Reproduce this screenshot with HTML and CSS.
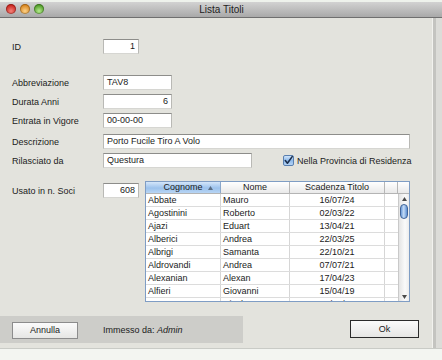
FILE: index.html
```html
<!DOCTYPE html>
<html>
<head>
<meta charset="utf-8">
<link rel="stylesheet" href="styles.css">
</head>
<body>
<div class="window">
  <div class="topline"></div>
  <div class="titlebar">
    <div class="lights">
      <span class="light red"></span>
      <span class="light orange"></span>
      <span class="light green"></span>
    </div>
    <div class="title">Lista Titoli</div>
  </div>
  <div class="main">
    <div class="content">
      <div class="row r-id">
        <div class="label">ID</div>
        <div class="field w36 right">1</div>
      </div>
      <div class="row r-abbr">
        <div class="label">Abbreviazione</div>
        <div class="field w69">TAV8</div>
      </div>
      <div class="row r-4">
        <div class="label">Durata Anni</div>
        <div class="field w69 right">6</div>
      </div>
      <div class="row r-4">
        <div class="label">Entrata in Vigore</div>
        <div class="field w69">00-00-00</div>
      </div>
      <div class="row r-6">
        <div class="label">Descrizione</div>
        <div class="field w307">Porto Fucile Tiro A Volo</div>
      </div>
      <div class="row r-4">
        <div class="label">Rilasciato da</div>
        <div class="field w149">Questura</div>
        <div class="check">
          <svg width="11" height="11" viewBox="0 0 11 11">
            <defs>
              <linearGradient id="cb" x1="0" y1="0" x2="0" y2="1">
                <stop offset="0" stop-color="#d6e8fb"/>
                <stop offset="0.5" stop-color="#8fbbec"/>
                <stop offset="1" stop-color="#b8d6f6"/>
              </linearGradient>
            </defs>
            <rect x="0.5" y="0.5" width="10" height="10" rx="1.5" fill="url(#cb)" stroke="#5a7fae"/>
            <path d="M2.3 5.6 L4.4 8.2 L9.2 1.6" fill="none" stroke="#1c2f4c" stroke-width="1.6" stroke-linecap="round" stroke-linejoin="round"/>
          </svg>
          <span>Nella Provincia di Residenza</span>
        </div>
      </div>
      <div class="row r-soci">
        <div class="label lbl-soci">Usato in n. Soci</div>
        <div class="field w36 right soci">608</div>
        <div class="table">
          <div class="thead">
            <div class="th sorted">Cognome
              <svg class="sort" width="5" height="4" viewBox="0 0 5 4"><path d="M0 4 L2.5 0 L5 4 Z" fill="#5b6f86"/></svg>
            </div>
            <div class="th">Nome</div>
            <div class="th">Scadenza Titolo</div>
            <div class="th"></div>
            <div class="th last"></div>
          </div>
          <div class="tbody">
            <div class="rows">
              <div class="tr"><div class="td">Abbate</div><div class="td">Mauro</div><div class="td c">16/07/24</div><div class="td"></div></div>
              <div class="tr"><div class="td">Agostinini</div><div class="td">Roberto</div><div class="td c">02/03/22</div><div class="td"></div></div>
              <div class="tr"><div class="td">Ajazi</div><div class="td">Eduart</div><div class="td c">13/04/21</div><div class="td"></div></div>
              <div class="tr"><div class="td">Alberici</div><div class="td">Andrea</div><div class="td c">22/03/25</div><div class="td"></div></div>
              <div class="tr"><div class="td">Albrigi</div><div class="td">Samanta</div><div class="td c">22/10/21</div><div class="td"></div></div>
              <div class="tr"><div class="td">Aldrovandi</div><div class="td">Andrea</div><div class="td c">07/07/21</div><div class="td"></div></div>
              <div class="tr"><div class="td">Alexanian</div><div class="td">Alexan</div><div class="td c">17/04/23</div><div class="td"></div></div>
              <div class="tr"><div class="td">Alfieri</div><div class="td">Giovanni</div><div class="td c">15/04/19</div><div class="td"></div></div>
              <div class="tr"><div class="td">Amato</div><div class="td">Nicola</div><div class="td c">30/06/22</div><div class="td"></div></div>
            </div>
            <div class="scroll">
              <svg class="arrow" width="5" height="4" viewBox="0 0 5 4"><path d="M0 4 L2.5 0 L5 4 Z" fill="#4a4a4a"/></svg>
              <div class="thumb"></div>
              <div class="track"></div>
              <svg class="arrow" width="5" height="4" viewBox="0 0 5 4"><path d="M0 0 L2.5 4 L5 0 Z" fill="#4a4a4a"/></svg>
            </div>
          </div>
        </div>
      </div>
      <div class="footer">
        <div class="strip">
          <div class="btn annulla">Annulla</div>
          <div class="immesso">Immesso da: <i>Admin</i></div>
        </div>
        <div class="btn ok">Ok</div>
      </div>
    </div>
    <div class="frame"></div>
  </div>
  <div class="bottom"></div>
</div>
</body>
</html>
```

FILE: styles.css
```css
* { box-sizing: border-box; }
html, body { margin: 0; padding: 0; }
body {
  width: 442px;
  height: 360px;
  overflow: hidden;
  font-family: "Liberation Sans", Arial, sans-serif;
  font-size: 9px;
  color: #1b1b1b;
  background: #e3e3dd;
}
.window {
  width: 442px;
  height: 360px;
  display: flex;
  flex-direction: column;
}
.topline {
  height: 2px;
  background: #eef2ec;
}
.titlebar {
  height: 16px;
  background: linear-gradient(#d2d2d2, #a9a9a9);
  border-bottom: 1px solid #6f6f6f;
  position: relative;
  display: flex;
  align-items: center;
  justify-content: center;
}
.lights {
  position: absolute;
  left: 6px;
  top: 2px;
  display: flex;
  gap: 4px;
}
.light {
  width: 10px;
  height: 10px;
  border-radius: 50%;
  box-shadow: inset 0 0 0 1px rgba(0,0,0,0.25);
}
.red { background: radial-gradient(circle at 50% 70%, #f5837a, #c8231b 70%); }
.orange { background: radial-gradient(circle at 50% 70%, #fdd38a, #d7841a 70%); }
.green { background: radial-gradient(circle at 50% 70%, #b6ec8e, #4d9a25 70%); }
.title {
  font-size: 10px;
  color: #222;
  margin-left: 1px;
}
.main {
  display: flex;
  height: 330px;
}
.content {
  width: 432px;
  display: flex;
  flex-direction: column;
  background: #e3e3dd;
}
.frame {
  width: 10px;
  border-left: 1px solid #f2f2ee;
  background: linear-gradient(90deg, #c4c4c0 0, #c4c4c0 3px, #dcdcd8 3px);
}
.bottom {
  height: 12px;
  border-top: 1px solid #c9cbc6;
  background: #f3f5f1;
}
.row {
  display: flex;
  align-items: center;
  padding-left: 12px;
}
.r-id { margin-top: 21px; }
.r-abbr { margin-top: 21px; }
.r-4 { margin-top: 4px; }
.r-6 { margin-top: 6px; }
.r-soci { margin-top: 13px; align-items: flex-start; }
.label {
  width: 91px;
  flex: none;
}
.lbl-soci { margin-top: 5px; }
.field {
  height: 15px;
  background: #fff;
  border: 1px solid #b9b9b5;
  border-top-color: #8d8d8a;
  border-bottom-color: #d6d6d2;
  padding: 0 3px;
  line-height: 13px;
  flex: none;
  white-space: nowrap;
}
.right { text-align: right; }
.w36 { width: 36px; }
.w69 { width: 69px; }
.w149 { width: 149px; }
.w307 { width: 307px; }
.soci { margin-top: 2px; }
.check {
  display: flex;
  align-items: center;
  margin-left: 31px;
  gap: 3px;
}
.check svg { display: block; }
.table {
  margin-left: 6px;
  width: 265px;
  height: 121px;
  border: 1px solid #7f9dc4;
  background: #fff;
  display: flex;
  flex-direction: column;
}
.thead {
  display: flex;
  height: 12px;
  background: linear-gradient(#ffffff, #e9e9e9);
  border-bottom: 1px solid #b4b4b4;
  flex: none;
}
.th {
  border-right: 1px solid #b6b6b6;
  text-align: center;
  line-height: 11px;
  position: relative;
}
.th:nth-child(1) { width: 75px; }
.th:nth-child(2) { width: 69px; }
.th:nth-child(3) { width: 95px; }
.th:nth-child(4) { width: 13px; }
.th.last { width: 11px; border-right: none; }
.th.sorted {
  background: linear-gradient(#d4e6fa, #9cc2ec 55%, #b8d5f4);
  border-right-color: #8aa7cb;
}
.sort {
  position: absolute;
  right: 7px;
  top: 4px;
}
.tbody {
  display: flex;
  flex: 1;
  overflow: hidden;
}
.rows {
  width: 252px;
  overflow: hidden;
}
.tr {
  display: flex;
  height: 13px;
  border-bottom: 1px solid #dcdcdc;
}
.td {
  border-right: 1px solid #d6d6d6;
  line-height: 12px;
  padding-left: 2px;
  white-space: nowrap;
  overflow: hidden;
}
.td:nth-child(1) { width: 75px; }
.td:nth-child(2) { width: 69px; }
.td:nth-child(3) { width: 95px; }
.td:nth-child(4) { width: 13px; border-right: none; }
.td.c { text-align: center; padding-left: 0; }
.scroll {
  width: 11px;
  border-left: 1px solid #c9c9c9;
  background: linear-gradient(90deg, #e4e4e4, #fafafa 60%, #ececec);
  display: flex;
  flex-direction: column;
  align-items: center;
  padding: 3px 0 2px;
}
.arrow { display: block; flex: none; }
.thumb {
  margin-top: 3px;
  width: 8px;
  height: 15px;
  border-radius: 4px;
  border: 1px solid #41659a;
  background: linear-gradient(90deg, #6c9ad8, #c4dcf7 45%, #5d8fd3);
  flex: none;
}
.track { flex: 1; }
.footer {
  margin-top: 14px;
  display: flex;
  align-items: flex-start;
}
.strip {
  width: 243px;
  height: 27px;
  background: #cdcdc9;
  display: flex;
  align-items: center;
  padding-left: 12px;
}
.btn {
  height: 17px;
  line-height: 15px;
  text-align: center;
  background: linear-gradient(#fbfbfb, #e6e6e4);
  border: 1px solid #8c8c8c;
  font-size: 9px;
}
.annulla {
  width: 66px;
  margin-top: 1px;
}
.immesso {
  margin-left: 25px;
}
.ok {
  margin-left: auto;
  margin-right: 13px;
  margin-top: 4px;
  width: 69px;
  height: 18px;
  line-height: 16px;
  border-color: #2b2b2b;
}
```
